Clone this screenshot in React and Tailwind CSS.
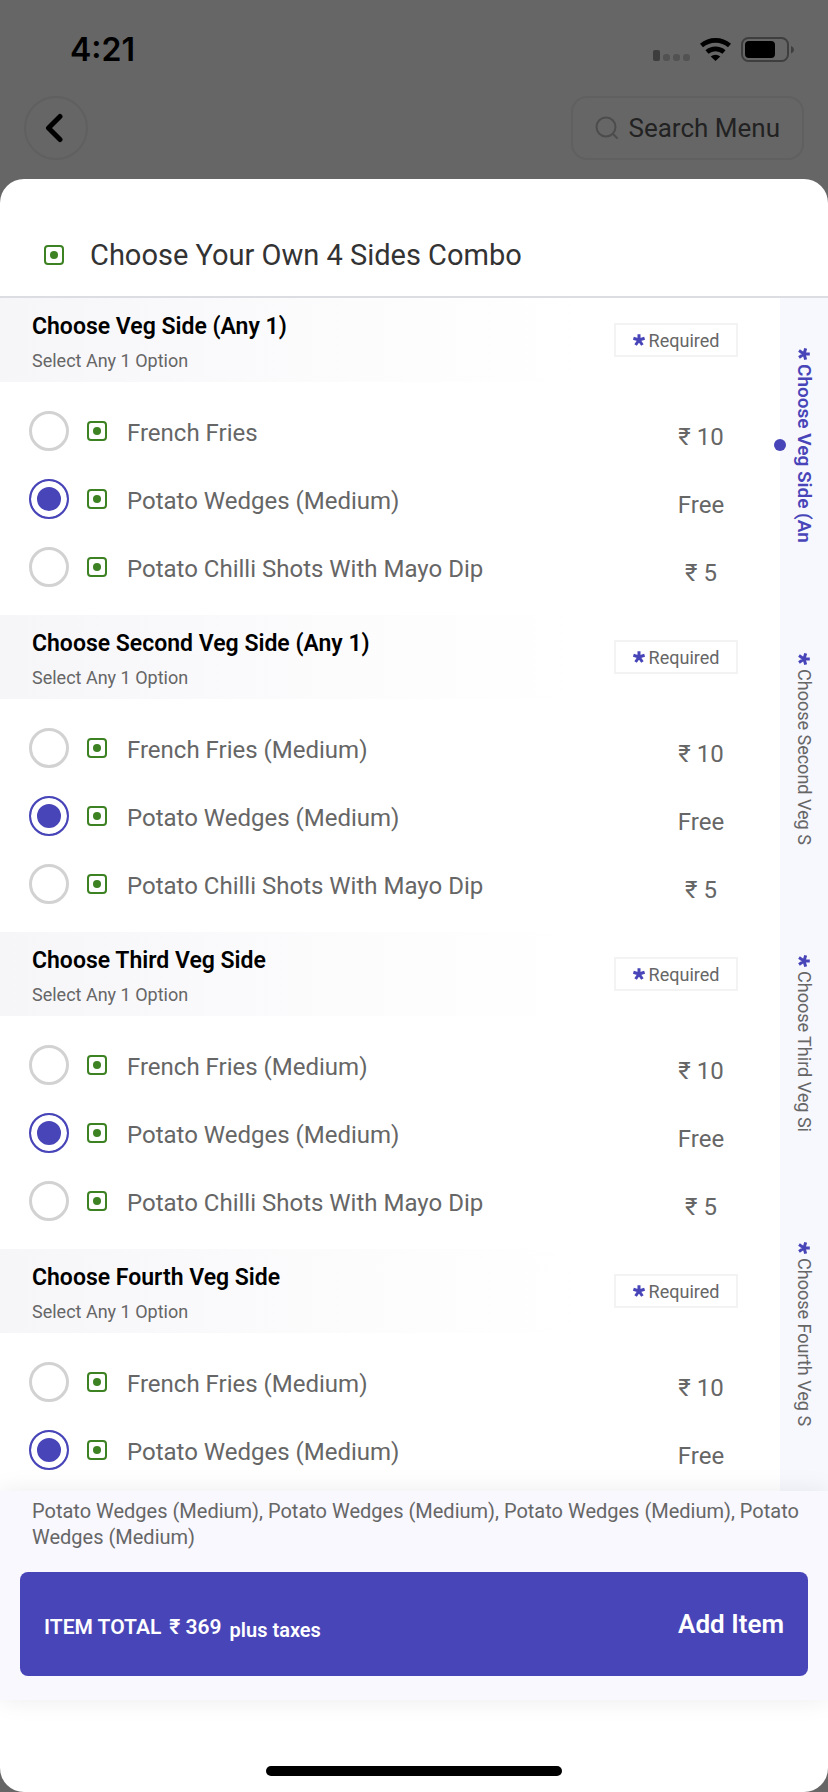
import { useState } from 'react'
import clsx from 'clsx'

const sides = [
  { id: 'fries', name: 'French Fries (Medium)', price: '₹ 10' },
  { id: 'wedges', name: 'Potato Wedges (Medium)', price: 'Free' },
  { id: 'chilli', name: 'Potato Chilli Shots With Mayo Dip', price: '₹ 5' },
]

const groups = [
  {
    id: 'first',
    title: 'Choose Veg Side (Any 1)',
    tab: 'Choose Veg Side (An',
    options: [{ ...sides[0], name: 'French Fries' }, sides[1], sides[2]],
  },
  { id: 'second', title: 'Choose Second Veg Side (Any 1)', tab: 'Choose Second Veg S', options: sides },
  { id: 'third', title: 'Choose Third Veg Side', tab: 'Choose Third Veg Si', options: sides },
  { id: 'fourth', title: 'Choose Fourth Veg Side', tab: 'Choose Fourth Veg S', options: sides.slice(0, 2) },
]

function VegMark() {
  return (
    <span className="flex size-5 shrink-0 items-center justify-center rounded-[4px] border-2 border-[#3c8122]">
      <span className="size-2 rounded-full bg-[#3c8122]" />
    </span>
  )
}

function Asterisk({ className }) {
  return (
    <svg viewBox="0 0 12 12" className={clsx('size-3 shrink-0', className)} fill="none" stroke="#4845b8" strokeWidth="3">
      <path d="M6 6V0.2M6 6L0.4 4.3M6 6L11.6 4.3M6 6L2.6 11M6 6L9.4 11" />
    </svg>
  )
}

function StatusBar() {
  return (
    <div className="flex h-24 items-center justify-between pt-1 pr-[34px] pl-[70px]">
      <span className="font-['Inter',sans-serif] text-[32px] font-semibold text-black">4:21</span>
      <svg width="142" height="26" viewBox="0 0 142 26">
        <rect x="1" y="13" width="7" height="11" rx="2" fill="#3d3d3d" />
        <rect x="11" y="17" width="7" height="7" rx="3" fill="#525252" />
        <rect x="21" y="17" width="7" height="7" rx="3" fill="#525252" />
        <rect x="31" y="17" width="7" height="7" rx="3" fill="#525252" />
        <g fill="none" stroke="#000" strokeWidth="4.6">
          <path d="M49.5 8.6a21.5 21.5 0 0 1 28 0" />
          <path d="M55 15a13 13 0 0 1 17 0" />
        </g>
        <path d="M63.500 24l-4.800-4.500a7.200 7.200 0 0 1 9.600 0z" fill="#000" />
        <rect x="90" y="1" width="46" height="23" rx="6.500" fill="none" stroke="#3e3e3e" strokeWidth="2" />
        <rect x="93" y="4" width="30" height="17" rx="4" fill="#000" />
        <path d="M139 9q3 1.200 3 3.700t-3 3.700z" fill="#3e3e3e" />
      </svg>
    </div>
  )
}

function OptionRow({ group, option, checked, onSelect }) {
  return (
    <label className="flex h-[68px] items-center">
      <input
        type="radio"
        name={group}
        checked={checked}
        onChange={onSelect}
        className="size-10 shrink-0 appearance-none rounded-full border-[3px] border-[#d2d2d2] bg-white checked:border-2 checked:border-[#4845b8] checked:bg-[#4845b8] checked:shadow-[inset_0_0_0_6px_white]"
      />
      <span className="ml-[18px]">
        <VegMark />
      </span>
      <span className="ml-5 flex-1 pt-1 text-[24px]">{option.name}</span>
      <span className="w-[74px] pt-3 text-center text-[24px]">{option.price}</span>
    </label>
  )
}

function OptionGroup({ group, selected, onSelect }) {
  return (
    <section role="radiogroup" aria-label={group.title}>
      <div className="flex h-[84px] items-center justify-between bg-linear-to-r from-[#f6f6f9] via-[#fcfcfd] via-45% to-white to-75% pr-[42px] pl-8">
        <div className="pt-2">
          <h2 className="text-[23px] leading-8 font-semibold text-black">{group.title}</h2>
          <p className="pt-0.5 text-[18px] leading-8">Select Any 1 Option</p>
        </div>
        <span className="flex h-[34px] w-[124px] items-center justify-center gap-1 border-2 border-[#f3f3f3] bg-white text-[18px]">
          <Asterisk />
          Required
        </span>
      </div>
      <div className="pt-[15px] pr-[42px] pb-[14px] pl-[29px]">
        {group.options.map((option) => (
          <OptionRow
            key={option.id}
            group={group.id}
            option={option}
            checked={selected === option.id}
            onSelect={() => onSelect(option.id)}
          />
        ))}
      </div>
    </section>
  )
}

export default function App() {
  const [active, setActive] = useState('first')
  const [picked, setPicked] = useState({ first: 'wedges', second: 'wedges', third: 'wedges', fourth: 'wedges' })

  const summary = groups.map((group) => sides.find((side) => side.id === picked[group.id]).name).join(', ')

  return (
    <div className="flex h-screen flex-col bg-[#666] font-['Roboto',sans-serif] text-[#666]">
      <StatusBar />
      <header className="flex items-center justify-between px-6 pb-[19px]">
        <button aria-label="Back" className="flex size-16 items-center justify-center rounded-full border-2 border-[#606060]">
          <svg width="18" height="30" viewBox="0 0 18 30" className="mr-1" fill="none" stroke="#000" strokeWidth="5" strokeLinecap="round" strokeLinejoin="round">
            <path d="M15 3.500L3.500 15L15 26.500" />
          </svg>
        </button>
        <button className="flex h-16 items-center gap-[10px] rounded-2xl border-2 border-[#606060] px-[22px] text-[26px] text-[#222]">
          <svg width="24" height="24" viewBox="0 0 24 24" fill="none" stroke="#4c4c4c" strokeWidth="2" strokeLinecap="round">
            <circle cx="11" cy="11" r="9.500" />
            <path d="M18 18l4 4" />
          </svg>
          Search Menu
        </button>
      </header>

      <main className="flex min-h-0 flex-1 flex-col overflow-hidden rounded-3xl bg-white">
        <div className="flex items-center gap-[26px] border-b-2 border-[#dcdde2] px-11 pt-14 pb-[21px]">
          <VegMark />
          <h1 className="text-[29px] leading-10 text-[#333]">Choose Your Own 4 Sides Combo</h1>
        </div>

        <div className="flex min-h-0 flex-1">
          <div className="flex-1 overflow-hidden">
            {groups.map((group) => (
              <OptionGroup
                key={group.id}
                group={group}
                selected={picked[group.id]}
                onSelect={(id) => setPicked({ ...picked, [group.id]: id })}
              />
            ))}
          </div>
          <nav className="flex w-12 shrink-0 flex-col items-center gap-[110px] bg-[#f7f7fe] pt-[50px]">
            {groups.map((group) => (
              <button
                key={group.id}
                onClick={() => setActive(group.id)}
                className={clsx(
                  'relative flex w-12 items-center gap-1 whitespace-nowrap [writing-mode:vertical-rl]',
                  active === group.id ? 'text-[19px] font-semibold text-[#4845b8]' : 'text-[18px]'
                )}
              >
                {active === group.id && (
                  <span className="absolute top-1/2 left-0 size-3 -translate-1/2 rounded-full bg-[#4845b8]" />
                )}
                <Asterisk className="rotate-90" />
                {group.tab}
              </button>
            ))}
          </nav>
        </div>

        <footer className="relative bg-[#f8f8fe] px-5 pt-[7px] pb-6 shadow-[0_0_24px_rgba(0,0,0,0.08)]">
          <p className="pl-3 text-[20px] leading-[26px]">{summary}</p>
          <button className="mt-[22px] flex h-[104px] w-full items-center justify-between rounded-lg bg-[#4845b8] px-6 font-semibold text-white">
            <span className="flex items-center gap-2 pt-2 text-[21px]">
              <span>ITEM TOTAL</span>
              <span>₹ 369</span>
              <span className="pt-1 text-[20px]">plus taxes</span>
            </span>
            <span className="text-[26px]">Add Item</span>
          </button>
        </footer>
        <div className="flex h-[92px] items-end justify-center pb-4">
          <span className="h-[10px] w-[296px] rounded-full bg-black" />
        </div>
      </main>
    </div>
  )
}
